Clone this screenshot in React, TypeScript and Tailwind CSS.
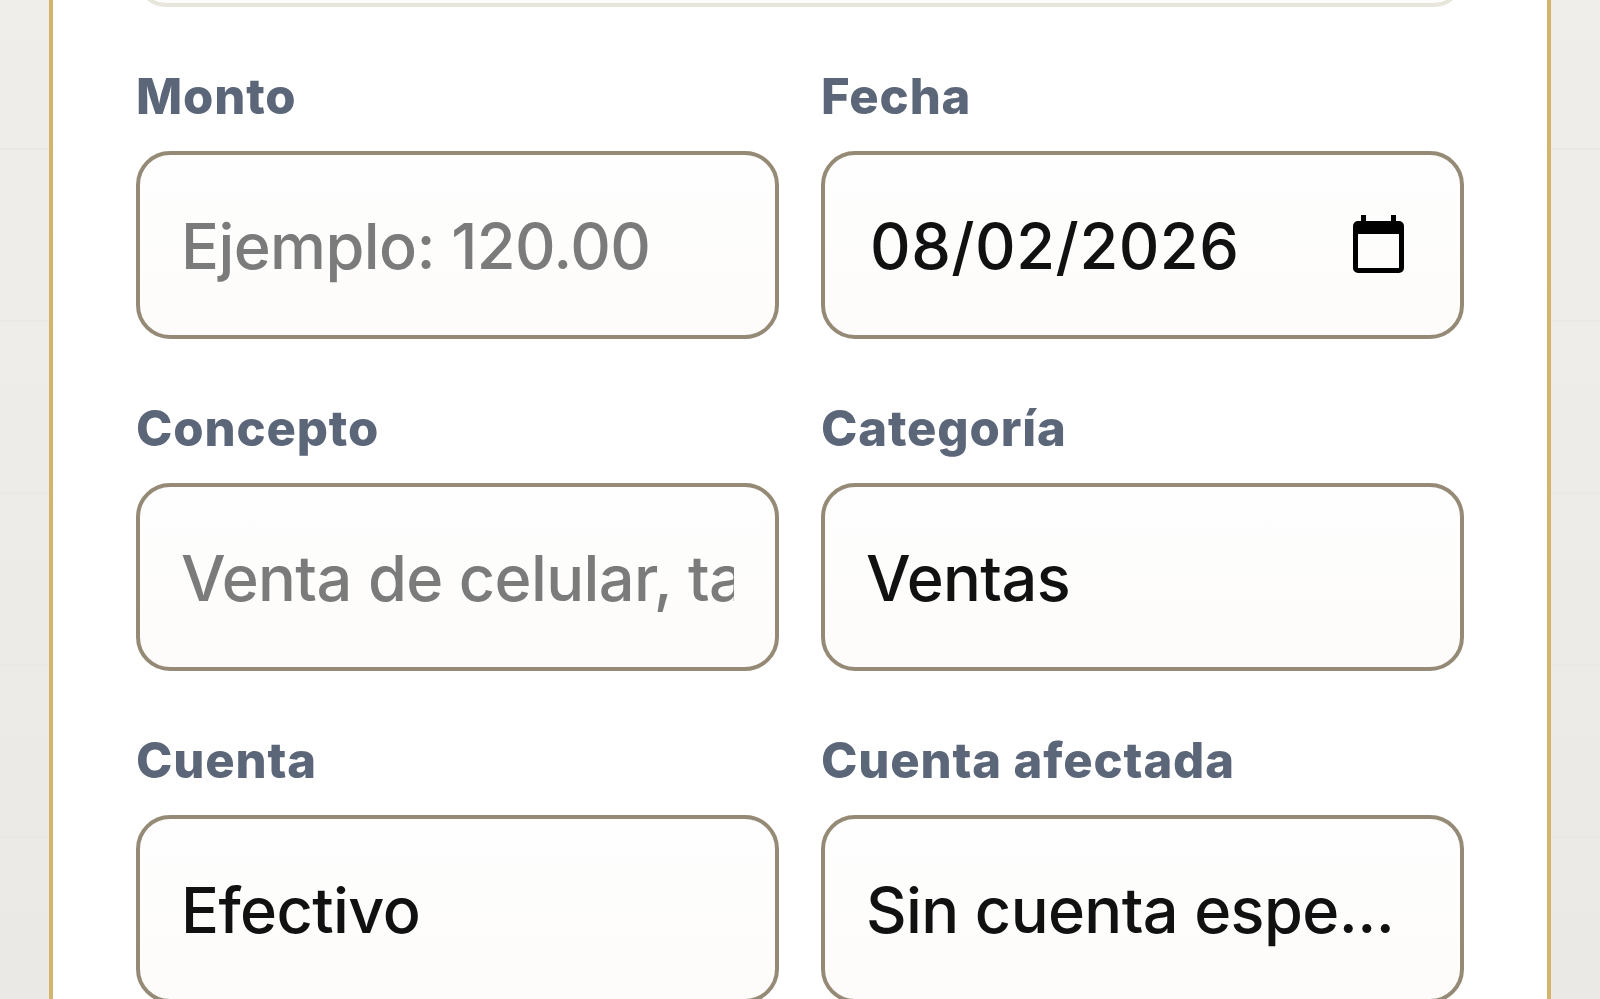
const labelCls = "block text-[#5b6679] text-[49px] leading-[56px] font-extrabold tracking-[0.85px] mb-[26px]";
const fieldCls =
  "block w-full h-[188px] rounded-[34px] border-[4px] border-[#958a76] bg-gradient-to-b from-[#fefefe] to-[#fdfcfa] text-[#111111] text-[63px] font-[450] tracking-[-0.6px] outline-none appearance-none placeholder:text-[#7b7b7b]";

function CalendarIcon() {
  return (
    <svg className="mb-[6px]" width="51" height="58" viewBox="0 0 51 58" fill="none">
      <rect x="8" y="0" width="5" height="10" fill="#000" />
      <rect x="38" y="0" width="5" height="10" fill="#000" />
      <path
        d="M5 6h41a5 5 0 0 1 5 5v42a5 5 0 0 1-5 5H5a5 5 0 0 1-5-5V11a5 5 0 0 1 5-5Zm0 13v34h41V19H5Z"
        fill="#000"
        fillRule="evenodd"
      />
    </svg>
  );
}

export default function App() {
  return (
    <div
      className="h-[999px] overflow-hidden bg-[linear-gradient(to_bottom,#e9e8e4_0,#e9e8e4_2px,transparent_2px),linear-gradient(to_bottom,#efeeea,#ebe9e5)] bg-[size:100%_172px,100%_100%] bg-[position:0_148px,0_0] px-[49px]"
      style={{ fontFamily: "Inter, 'Noto Sans', sans-serif" }}
    >
      <div className="flow-root h-full bg-white border-x-[4px] border-[#d4b36a] px-[83px]">
        {/* Previous field, cut by the top edge */}
        <div className="h-[60px] -mt-[53px] rounded-[34px] border-[4px] border-[#e8e5da] bg-[#fdfdfb]" />

        <div className="grid grid-cols-2 gap-x-[42px] gap-y-[62px] mt-[62px]">
          <div>
            <label className={labelCls}>Monto</label>
            <input className={`${fieldCls} px-[41px] pt-[1px]`} placeholder="Ejemplo: 120.00" />
          </div>
          <div>
            <label className={labelCls}>Fecha</label>
            <div className={`${fieldCls} flex items-center justify-between pl-[45px] pr-[56px] pt-[3px]`}>
              <span className="tracking-[0.5px]">08/02/2026</span>
              <CalendarIcon />
            </div>
          </div>
          <div>
            <label className={labelCls}>Concepto</label>
            <input className={`${fieldCls} px-[41px] pt-[1px]`} placeholder="Venta de celular, tablet" />
          </div>
          <div>
            <label className={labelCls}>Categoría</label>
            <select className={`${fieldCls} px-[41px] pt-[3px]`} defaultValue="Ventas">
              <option>Ventas</option>
            </select>
          </div>
          <div>
            <label className={labelCls}>Cuenta</label>
            <select className={`${fieldCls} px-[41px] pt-[3px]`} defaultValue="Efectivo">
              <option>Efectivo</option>
            </select>
          </div>
          <div>
            <label className={labelCls}>Cuenta afectada</label>
            <select className={`${fieldCls} px-[41px] pt-[3px]`} defaultValue="Sin cuenta espe...">
              <option>Sin cuenta espe...</option>
            </select>
          </div>
        </div>
      </div>
    </div>
  );
}
